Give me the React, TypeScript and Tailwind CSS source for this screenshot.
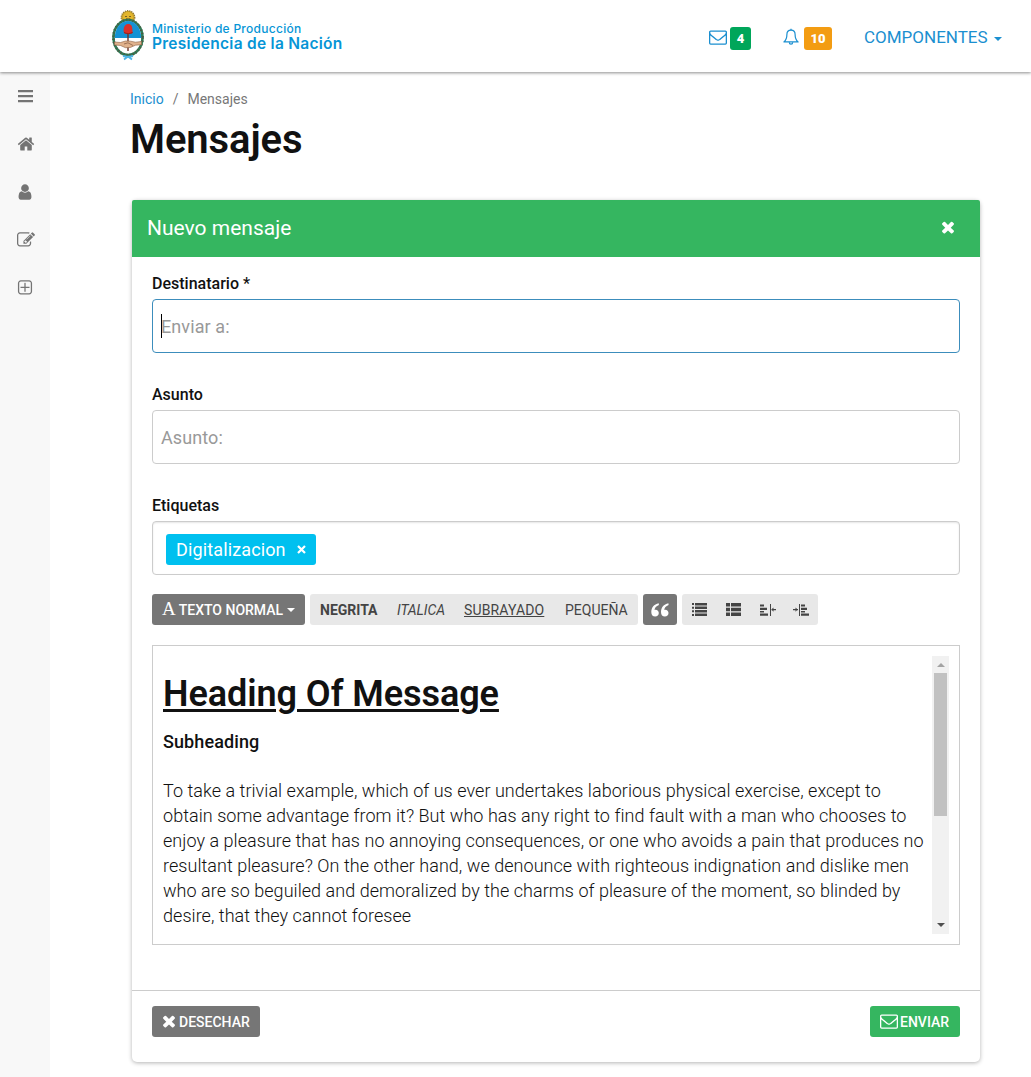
import type { ReactNode } from 'react';

const PATHS = {
  home: 'M1472 992v480q0 26-19 45t-45 19h-384v-384h-256v384h-384q-26 0-45-19t-19-45v-480q0-1 .5-3t.5-3l575-474 575 474q1 2 1 6zm223-69l-62 74q-8 9-21 11h-3q-13 0-21-7l-692-577-692 577q-12 8-24 7-13-2-21-11l-62-74q-8-10-7-23.5t11-21.5l719-599q32-26 76-26t76 26l244 204v-195q0-14 9-23t23-9h192q14 0 23 9t9 23v408l219 182q10 8 11 21.5t-7 23.5z',
  user: 'M1536 1399q0 109-62.5 187t-150.5 78h-854q-88 0-150.5-78t-62.5-187q0-85 8.5-160.5t31.5-152 58.5-131 94-89 134.5-34.5q131 128 313 128t313-128q76 0 134.5 34.5t94 89 58.5 131 31.5 152 8.5 160.5zm-256-887q0 159-112.5 271.5t-271.5 112.5-271.5-112.5-112.5-271.5 112.5-271.5 271.5-112.5 271.5 112.5 112.5 271.5z',
  edit: 'M888 1184l116-116-152-152-116 116v56h96v96h56zm440-720q-16-16-33 1l-350 350q-17 17-1 33t33-1l350-350q17-17 1-33zm80 594v190q0 119-84.5 203.5t-203.5 84.5h-832q-119 0-203.5-84.5t-84.5-203.5v-832q0-119 84.5-203.5t203.5-84.5h832q63 0 117 25 15 7 18 23 3 17-9 29l-49 49q-14 14-32 8-23-6-45-6h-832q-66 0-113 47t-47 113v832q0 66 47 113t113 47h832q66 0 113-47t47-113v-126q0-13 9-22l64-64q15-15 35-7t20 29zm-96-738l288 288-672 672h-288v-288zm444 132l-92 92-288-288 92-92q28-28 68-28t68 28l152 152q28 28 28 68t-28 68z',
  plus: 'M1344 800v64q0 14-9 23t-23 9h-352v352q0 14-9 23t-23 9h-64q-14 0-23-9t-9-23v-352h-352q-14 0-23-9t-9-23v-64q0-14 9-23t23-9h352v-352q0-14 9-23t23-9h64q14 0 23 9t9 23v352h352q14 0 23 9t9 23zm128 448v-832q0-66-47-113t-113-47h-832q-66 0-113 47t-47 113v832q0 66 47 113t113 47h832q66 0 113-47t47-113zm128-832v832q0 119-84.5 203.5t-203.5 84.5h-832q-119 0-203.5-84.5t-84.5-203.5v-832q0-119 84.5-203.5t203.5-84.5h832q119 0 203.5 84.5t84.5 203.5z',
  close: 'M1490 1322q0 40-28 68l-136 136q-28 28-68 28t-68-28l-294-294-294 294q-28 28-68 28t-68-28l-136-136q-28-28-28-68t28-68l294-294-294-294q-28-28-28-68t28-68l136-136q28-28 68-28t68 28l294 294 294-294q28-28 68-28t68 28l136 136q28 28 28 68t-28 68l-294 294 294 294q28 28 28 68z',
  mail: 'M1664 1504v-768q-32 36-69 66-268 206-426 338-51 43-83 67t-86.5 48.5-102.5 24.5h-2q-48 0-102.5-24.5t-86.5-48.5-83-67q-158-132-426-338-37-30-69-66v768q0 13 9.5 22.5t22.5 9.5h1472q13 0 22.5-9.5t9.5-22.5zm0-1051v-24.5l-.5-13-3-12.5-5.5-9-9-7.5-14-2.5h-1472q-13 0-22.5 9.5t-9.5 22.5q0 168 147 284 193 152 401 317 6 5 35 29.5t46 37.5 44.5 31.5 50.5 27.5 43 9h2q20 0 43-9t50.5-27.5 44.5-31.5 46-37.5 35-29.5q208-165 401-317 54-43 100.5-115.5t46.5-131.5zm128-37v1088q0 66-47 113t-113 47h-1472q-66 0-113-47t-47-113v-1088q0-66 47-113t113-47h1472q66 0 113 47t47 113z',
};

function Icon({ name, size, className = '' }: { name: keyof typeof PATHS; size: number; className?: string }) {
  return (
    <svg width={size} height={size} viewBox="0 0 1792 1792" fill="currentColor" className={'shrink-0 ' + className}>
      <path d={PATHS[name]} />
    </svg>
  );
}

function Emblem() {
  return (
    <svg width="34" height="52" viewBox="0 0 34 52" className="shrink-0">
      <circle cx="17" cy="8.500" r="6.800" fill="#c9a227" stroke="#8a7230" strokeWidth="1.200" strokeDasharray="1.200 1" />
      <circle cx="17" cy="8" r="5" fill="#e3b62d" />
      <path d="M14 7.500h2M18 7.500h2M15 10h4" stroke="#6e5520" strokeWidth=".9" />
      <ellipse cx="17" cy="28.500" rx="14.500" ry="17.500" fill="#fff" stroke="#2f7d57" strokeWidth="2.600" />
      <ellipse cx="17" cy="28.500" rx="14.600" ry="17.600" fill="none" stroke="#4a5a43" strokeWidth="2.600" strokeDasharray="1.200 2" />
      <path d="M3.800 29C3.800 19 9.500 12 17 12S30.200 19 30.200 29Z" fill="#1492d4" />
      <path d="M17 23v19" stroke="#6c3226" strokeWidth="1.400" />
      <path d="M13 24c-1-4 0-8.500 4-9 3-.2 4.500 2.500 4.300 5l.4 4c-2 1.500-6.500 1.500-8.700 0z" fill="#d9302a" />
      <path d="M13 23.500c2.500 1.400 6 1.400 8.600 0" stroke="#8f2420" fill="none" />
      <path d="M3.500 33l6 .5 5-1.500 5 .2 5 1 6-.7v3.200l-6 .5-5 2.200-5 .3-5-2.200-6-.6z" fill="#dfb18c" stroke="#8b6145" strokeWidth=".6" />
      <path d="M13 35l4-1.200 5 2.700" stroke="#80563d" strokeWidth=".7" fill="none" />
      <path d="M12 47l5 1 5-1M17 47.500l-4 3M17 47.500l4 3" stroke="#4eb5e6" strokeWidth="1.800" fill="none" />
    </svg>
  );
}

function Bell() {
  return (
    <svg width="16" height="18" viewBox="0 0 16 18" fill="none" stroke="currentColor" strokeWidth="1.200">
      <path d="M8 2.200C5.200 2.200 3.900 4.200 3.900 6.500c0 4-.9 5.700-3 7.400h14.200c-2.100-1.700-3-3.400-3-7.400 0-2.300-1.300-4.300-4.100-4.300z" strokeLinejoin="round" />
      <path d="M8 .8v1.400M6.300 14.200c0 1.200.7 1.900 1.700 1.900s1.700-.7 1.700-1.900" />
    </svg>
  );
}

function Caret() {
  return <span className="border-x-4 border-t-4 border-x-transparent border-t-current" />;
}

function Quote() {
  return (
    <svg width="18" height="14" viewBox="0 0 18 14" fill="#fff">
      <path d="M7.700.3C3 1.200.3 4.700.3 9c0 2.900 1.500 4.600 3.900 4.600 2.100 0 3.600-1.500 3.600-3.500S6.400 6.700 4.600 6.700c-.5 0-.9.100-1.100.2.200-2.200 1.700-3.900 4.400-5zM17.400.3C12.700 1.200 10 4.700 10 9c0 2.900 1.500 4.600 3.900 4.600 2.100 0 3.600-1.500 3.600-3.500s-1.400-3.400-3.200-3.400c-.5 0-.9.100-1.100.2.200-2.200 1.700-3.900 4.400-5z" />
    </svg>
  );
}

function List({ thick = false }: { thick?: boolean }) {
  return (
    <svg width="15" height="13" viewBox="0 0 15 13" fill="currentColor">
      {thick ? (
        <path d="M0 0h4v3.600H0zM5 0h10v3.600H5zM0 4.700h4v3.600H0zM5 4.700h10v3.600H5zM0 9.400h4V13H0zM5 9.400h10V13H5z" />
      ) : (
        <path d="M0 0h2v2H0zM3 0h12v2.400H3zM0 3.700h2v2H0zM3 3.500h12v2.400H3zM0 7.300h2v2H0zM3 7h12v2.400H3zM0 11h2v2H0zM3 10.600h12V13H3z" />
      )}
    </svg>
  );
}

function Indent({ right = false }: { right?: boolean }) {
  return (
    <svg width="16" height="14" viewBox="0 0 16 14" fill="currentColor">
      {right ? (
        <path d="M0 6h5v1.200H0zM2.500 4.500L4.700 6.600 2.500 8.700zM6 1h1v12H6zM8 1.500h4v2H8zM8 4.700h6v2.200H8zM8 8h4v1.500H8zM8 10.500h8v2.200H8z" />
      ) : (
        <path d="M0 1.500h4v2H0zM0 4.700h7v2.200H0zM0 8h4v1.500H0zM0 10.500h8v2.200H0zM10 1h1v12h-1zM11.500 6h4.500v1.200h-4.500zM13.500 4.500v4.200l-2.200-2.100z" />
      )}
    </svg>
  );
}

function Label({ children }: { children: ReactNode }) {
  return <label className="block h-[32px] pt-[6px] text-[16px] leading-[22px] font-medium text-[#111]">{children}</label>;
}

export default function App() {
  return (
    <div className="h-[1077px] overflow-hidden bg-white font-[Roboto,sans-serif] text-[#111]">
      <header className="relative flex h-[72px] bg-white shadow-[0_1px_3px_rgba(0,0,0,0.45)]">
        <div className="flex w-[360px] pt-[9px] pl-[111px] text-[#0695d6]">
          <Emblem />
          <div className="ml-[7px] pt-[12px] font-[Inter,sans-serif] whitespace-nowrap">
            <div className="text-[12px] leading-[15px] font-medium tracking-[0.270px]">Ministerio de Producción</div>
            <div className="text-[15.500px] leading-[15px] font-semibold tracking-[0.270px]">Presidencia de la Nación</div>
          </div>
        </div>
        <nav className="mt-[27px] ml-[348px] flex h-[23px] text-[#1b8fd0]">
          <Icon name="mail" size={18} className="mt-[1px] ml-[1px]" />
          <span className="ml-[3px] flex w-[21px] items-center justify-center rounded-[3px] bg-[#00a65a] text-[13px] font-black text-white">4</span>
          <span className="mt-[1px] ml-[32px] w-[16px]"><Bell /></span>
          <span className="ml-[5px] flex w-[28px] items-center justify-center rounded-[3px] bg-[#f39c12] text-[13px] font-black text-white">10</span>
          <span className="ml-[32px] text-[17px] leading-[21px]">COMPONENTES</span>
          <span className="mt-[10px] ml-[6px] flex"><Caret /></span>
        </nav>
      </header>
      <div className="flex">
        <aside className="flex h-[1005px] w-[50px] shrink-0 flex-col bg-[#f8f8f8] pl-[16px] text-[#747474]">
          <svg width="16" height="13" viewBox="0 0 16 13" className="mt-[18px] ml-[1px]" fill="currentColor">
            <path d="M1 0h15v2.200H1zM1 5h15v2.200H1zM1 10h15v2.200H1z" />
          </svg>
          <Icon name="home" size={18} className="mt-[32px] ml-[1px]" />
          <Icon name="user" size={18} className="mt-[30px]" />
          <Icon name="edit" size={18} className="mt-[30px] ml-[1px]" />
          <Icon name="plus" size={18} className="mt-[30px]" />
        </aside>
        <main className="pl-[80px]">
          <div className="flex h-[41px] pt-[17px] text-[14px] leading-[20px] text-[#777]">
            <span className="text-[#1b8fd0]">Inicio</span>
            <span className="ml-[9px]">/</span>
            <span className="ml-[9px]">Mensajes</span>
          </div>
          <h1 className="h-[87px] pt-px text-[40px] leading-[52px] font-semibold tracking-[-0.1px]">Mensajes</h1>
          <section className="ml-[2px] h-[862px] w-[848px] rounded-[5px] shadow-[0_1px_4px_rgba(0,0,0,0.3)]">
            <div className="flex h-[57px] items-center justify-between rounded-t-[2px] bg-[#35b660] pr-[23px] pl-[15px] text-[21px] text-white">
              <span>Nuevo mensaje</span>
              <Icon name="close" size={18} className="-mt-[3px]" />
            </div>
            <div className="h-[733px] px-[20px] pt-[10px]">
              <Label>Destinatario *</Label>
              <div className="mb-[25px] flex h-[54px] items-center rounded-[4px] border border-[#3c8dbc] pl-[8px] text-[18px] tracking-[0.1px] text-[#999]">
                <span className="-mr-px h-[24px] w-px bg-black" />
                Enviar a:
              </div>
              <Label>Asunto</Label>
              <div className="mb-[25px] flex h-[54px] items-center rounded-[4px] border border-[#ccc] pl-[8px] text-[18px] tracking-[0.1px] text-[#999]">Asunto:</div>
              <Label>Etiquetas</Label>
              <div className="flex h-[54px] items-center rounded-[4px] border border-[#ccc] pl-[13px] shadow-[inset_0_1px_2px_rgba(0,0,0,0.1)]">
                <span className="mt-[2px] flex h-[31px] w-[150px] items-center rounded-[3px] bg-[#00c0ef] pl-[10px] text-[18px] tracking-[0.130px] text-white">
                  Digitalizacion
                  <svg width="9" height="9" viewBox="0 0 9 9" className="ml-[11px]" stroke="#fff" strokeWidth="2.200">
                    <path d="M1 1l7 7M8 1L1 8" />
                  </svg>
                </span>
              </div>
              <div className="mt-[19px] flex h-[31px] gap-[5px] text-[14px] text-[#444]">
                <div className="flex w-[153px] items-center rounded-[3px] bg-[#767676] pl-[10px] font-medium text-white">
                  <span className="font-['Liberation_Serif',serif] text-[19px] font-normal">A</span>
                  <span className="mt-[2px] ml-[3px] whitespace-nowrap">TEXTO NORMAL</span>
                  <span className="ml-[4px] flex"><Caret /></span>
                </div>
                <div className="flex w-[328px] items-center rounded-[3px] bg-[#e8e8e8] px-[10px] pt-[2px]">
                  <span className="w-[77px] font-bold">NEGRITA</span>
                  <span className="w-[67px] tracking-[-0.1px] italic">ITALICA</span>
                  <span className="w-[101px] tracking-[0.15px] underline">SUBRAYADO</span>
                  <span>PEQUEÑA</span>
                </div>
                <div className="flex w-[34px] items-center justify-center rounded-[3px] bg-[#767676]"><Quote /></div>
                <div className="flex w-[136px] items-center rounded-[3px] bg-[#e8e8e8] pl-[10px]">
                  <div className="w-[34px]"><List /></div>
                  <div className="w-[34px]"><List thick /></div>
                  <div className="w-[33px]"><Indent /></div>
                  <Indent right />
                </div>
              </div>
              <div className="mt-[20px] flex h-[300px] justify-between border border-[#ccc] p-[10px]">
                <div className="w-[762px] whitespace-nowrap">
                  <h2 className="mt-[14px] h-[50px] text-[36px] leading-[48px] font-semibold tracking-[-0.060px] underline decoration-[3px] underline-offset-[3px]">Heading Of Message</h2>
                  <h3 className="h-[58px] pt-[9px] text-[18px] leading-[25px] font-medium tracking-[0.1px]">Subheading</h3>
                  <p className="text-[18px] leading-[25px] font-light tracking-[0.041px]">
                    To take a trivial example, which of us ever undertakes laborious physical exercise, except to
                    <br />obtain some advantage from it? But who has any right to find fault with a man who chooses to
                    <br />enjoy a pleasure that has no annoying consequences, or one who avoids a pain that produces no
                    <br />resultant pleasure? On the other hand, we denounce with righteous indignation and dislike men
                    <br />who are so beguiled and demoralized by the charms of pleasure of the moment, so blinded by
                    <br />desire, that they cannot foresee
                  </p>
                </div>
                <div className="flex w-[17px] shrink-0 flex-col items-center justify-between bg-[#f1f1f1]">
                  <div>
                    <div className="flex h-[17px] items-center justify-center"><span className="border-x-4 border-b-4 border-x-transparent border-b-[#a3a3a3]" /></div>
                    <div className="h-[143px] w-[13px] bg-[#c1c1c1]" />
                  </div>
                  <div className="flex h-[18px] items-center"><span className="border-x-4 border-t-4 border-x-transparent border-t-[#505050]" /></div>
                </div>
              </div>
            </div>
            <footer className="flex justify-between border-t border-[#ccc] px-[20px] pt-[15px] text-[14px] font-medium text-white">
              <div className="flex h-[31px] w-[108px] items-center rounded-[3px] bg-[#767676] pl-[8px]">
                <Icon name="close" size={18} className="-mt-[2px]" />
                <span className="mt-[2px] ml-px">DESECHAR</span>
              </div>
              <div className="flex h-[31px] w-[90px] items-center rounded-[3px] bg-[#35b660] pl-[10px]">
                <Icon name="mail" size={18} className="-mt-[2px]" />
                <span className="mt-[2px] ml-[2px]">ENVIAR</span>
              </div>
            </footer>
          </section>
        </main>
      </div>
    </div>
  );
}
